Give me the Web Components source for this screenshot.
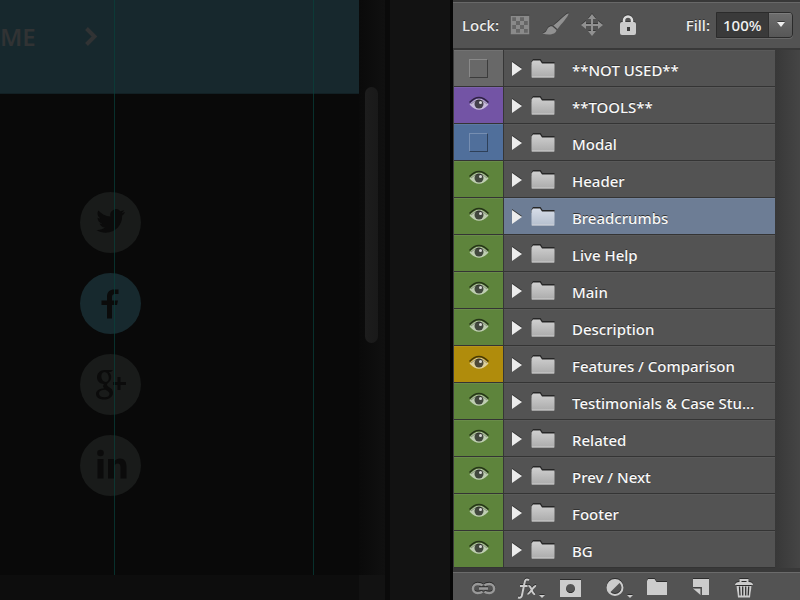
<!DOCTYPE html>
<html lang="en">
<head>
<meta charset="utf-8">
<title>Layers</title>
<style>
html, body { height: 100%; }
body { margin: 0; background: #0a0a0a; overflow: hidden; font-family: "Noto Sans", "Open Sans", sans-serif; }
</style>
</head>
<body>
<app-shell>
  <doc-canvas slot="canvas"></doc-canvas>
  <layers-panel slot="panel">
    <layer-row tint="#686868" off>**NOT USED**</layer-row>
    <layer-row tint="#7354a5">**TOOLS**</layer-row>
    <layer-row tint="#506f9b" off>Modal</layer-row>
    <layer-row tint="#5e843c">Header</layer-row>
    <layer-row tint="#5e843c" selected>Breadcrumbs</layer-row>
    <layer-row tint="#5e843c">Live Help</layer-row>
    <layer-row tint="#5e843c">Main</layer-row>
    <layer-row tint="#5e843c">Description</layer-row>
    <layer-row tint="#b08c0c">Features / Comparison</layer-row>
    <layer-row tint="#5e843c">Testimonials &amp; Case Stu...</layer-row>
    <layer-row tint="#5e843c">Related</layer-row>
    <layer-row tint="#5e843c">Prev / Next</layer-row>
    <layer-row tint="#5e843c">Footer</layer-row>
    <layer-row tint="#5e843c">BG</layer-row>
  </layers-panel>
</app-shell>
<script>
const define = (name, html, setup) => customElements.define(name, class extends HTMLElement {
  connectedCallback() {
    if (this.shadowRoot) return;
    const t = document.createElement('template');
    t.innerHTML = html;
    this.attachShadow({ mode: 'open' }).append(t.content.cloneNode(true));
    if (setup) setup(this, this.shadowRoot);
  }
});

define('app-shell', `
<style>
  :host { display: grid; grid-template-columns: minmax(0, 1fr) 350px; height: 100vh; }
  ::slotted(*) { min-width: 0; min-height: 0; }
</style>
<slot name="canvas"></slot><slot name="panel"></slot>`);

define('social-link', `
<style>
  :host { display: block; }
  a { display: flex; align-items: center; justify-content: center; width: 61px; height: 61px; border-radius: 50%; background: #191b1a; color: #0b0b0b; }
  :host([active]) a { background: #17292e; }
  svg { width: 61px; height: 61px; fill: currentColor; }
</style>
<a href="#"></a>`, (host, root) => {
  const shapes = {
    Twitter: '<path d="M45 20c-1 .5-2 .8-3.300 1 1-.8 2-1.800 2.400-3-1.100.6-2.300 1.100-3.700 1.300a5.800 5.800 0 0 0-10 5.300c-5-.3-9-2.500-12-6-1.700 3-.8 6 1.800 7.800-1 0-1.900-.3-2.700-.7 0 3 2 5.200 4.700 5.800-.9.200-1.700.3-2.600.1.700 2.300 2.800 4 5.400 4-2.400 1.900-5.200 2.700-8.500 2.400 2.800 1.800 6 2.800 9 2.800 10.500 0 17-8.500 16.600-17 1.200-.9 2.200-2 2.900-3.800z"/>',
    Facebook: '<path d="M27 45.500V32h-5.500v-4.500H27V24c0-5.500 3-7.500 7-7.500h4.500v4.500h-3.500c-2 0-3 .8-3 2.800v3.700h6l-1 4.500h-5v13.500z"/>',
    'Google Plus': '<path fill-rule="evenodd" d="M33 16h-8c-5 0-8 3.400-8 7.200 0 4 3 6.700 7 6.700-1.600 2-1 3.300.4 4.300-5 .2-8.400 2.500-8.400 5.800 0 3.400 3.300 5.500 8 5.500 5.500 0 9-3 9-6.800 0-5.500-6-5.500-6-8 0-2 4.200-2.700 4.200-7.800 0-2.200-1-3.900-2.400-5H31zM24.500 18c5 0 6 10 1.400 10-5.500 0-6.200-10-1.400-10zm1 17.700c2.500 1.600 4 2.500 4 4 0 2.300-2 3.600-4.900 3.600-3.700 0-5.600-1.600-5.600-3.800 0-2.600 2.600-3.800 6.500-3.800zM37.500 23h3v5H46v3h-5.500v5h-3v-5H33v-3h4.500z"/>',
    LinkedIn: '<circle cx="20.500" cy="18" r="3.300"/><path d="M17.500 24h6v19.500h-6zM28 24h6v2.600c1.600-2.200 3.700-3.100 6-3.100 4.500 0 6.500 3 6.500 8v12h-6V32.500c0-2.700-.8-4-2.800-4-2.300 0-3.700 1.600-3.700 4.500v10.500h-6z"/>'
  };
  const n = host.getAttribute('name'), a = root.querySelector('a');
  a.setAttribute('aria-label', n);
  a.innerHTML = '<svg viewBox="0 0 61 61" aria-hidden="true">' + shapes[n] + '</svg>';
});

define('doc-canvas', `
<style>
  :host { display: grid; grid-template-columns: minmax(0, 1fr) 26px 5px 60px; grid-template-rows: minmax(0, 1fr) 25px; overflow: hidden; background: #0a0a0a; }
  .page { position: relative; overflow: hidden; background: #090909; }
  .banner { box-sizing: border-box; display: flex; align-items: center; gap: 48px; height: 94px; padding-bottom: 20px; background: #17282d; border-bottom: 1px solid #122024; color: #313334; }
  .banner a { color: inherit; font-size: 24px; line-height: 34px; font-weight: 600; text-decoration: none; }
  .banner svg { width: 14px; height: 22px; }
  nav { display: grid; gap: 20px; padding: 98px 80px; justify-content: start; }
  .guide { position: absolute; top: 0; bottom: 0; width: 1px; background: rgba(8, 65, 60, .7); }
  .g1 { left: 114px; } .g2 { left: 313px; }
  .track { background: linear-gradient(90deg, #0a0a0a, #101010); padding: 87px 7px 0 6px; }
  .thumb { height: 256px; border-radius: 7px; background: linear-gradient(90deg, #1d1d1d, #191919); }
  .gap { grid-row: 1 / 3; grid-column: 3; background: #0a0a0a; }
  .side { grid-row: 1 / 3; grid-column: 4; background: #121212; }
  .foot { background: #0d0d0d; } .corner { background: #121212; }
</style>
<div class="page">
  <div class="banner"><a href="#">ME</a><svg viewBox="0 0 14 22" aria-hidden="true"><path d="M2.500 2.500l8 8-8 8" fill="none" stroke="currentColor" stroke-width="4"/></svg></div>
  <nav aria-label="Share">
    <social-link name="Twitter"></social-link>
    <social-link name="Facebook" active></social-link>
    <social-link name="Google Plus"></social-link>
    <social-link name="LinkedIn"></social-link>
  </nav>
  <i class="guide g1"></i><i class="guide g2"></i>
</div>
<div class="track"><div class="thumb"></div></div>
<div class="gap"></div><div class="side"></div>
<div class="foot"></div><div class="corner"></div>`);

define('lock-bar', `
<style>
  :host { box-sizing: border-box; display: flex; align-items: center; justify-content: space-between; height: 50px; padding: 0 7px 0 9px; background: #535353; border-top: 2px solid #383838; border-bottom: 2px solid #393939; box-shadow: inset 0 1px #686868; color: #eee; font-size: 15px; font-weight: 500; text-shadow: 0 -1px #333; }
  .group { display: flex; align-items: center; }
  .locks { gap: 9px; }
  .tools { display: flex; gap: 12px; }
  button { padding: 0; border: 0; background: none; color: #919191; }
  .tools button { width: 24px; height: 24px; }
  svg { display: block; overflow: visible; filter: drop-shadow(0 -1px #3a3a3a); }
  .field { display: flex; box-sizing: border-box; width: 77px; height: 26px; margin-left: 6px; border: 1px solid #2b2b2b; border-radius: 0 4px 4px 0; background: #3a3a3a; box-shadow: 0 1px #686868; overflow: hidden; }
  input { box-sizing: border-box; width: 51px; min-width: 0; padding: 0 0 0 6px; border: 0; background: none; color: #f2f2f2; font: inherit; font-size: 15px; outline: 0; }
  .field button { flex: 1; display: grid; place-items: center; border-left: 1px solid #2f2f2f; background: linear-gradient(#6d6d6d, #575757); box-shadow: inset 0 1px #7d7d7d; color: #eee; }
</style>
<div class="group locks"><span>Lock:</span>
  <div class="tools">
    <button aria-label="Lock transparent pixels"><svg width="24" height="24" viewBox="0 0 24 24"><path fill="#666" d="M3 3h18v18H3z"/><path fill="none" stroke="#8a8a8a" d="M3.500 3.500h17v17h-17z" stroke-width="1.500"/><path fill="#8a8a8a" d="M8 4h4v4H8zM16 4h4v4h-4zM4 8h4v4H4zM12 8h4v4h-4zM8 12h4v4H8zM16 12h4v4h-4zM4 16h4v4H4zM12 16h4v4h-4z"/></svg></button>
    <button aria-label="Lock image pixels"><svg width="28" height="24" viewBox="2 0 28 24"><path fill="currentColor" d="M26.500 .5c1 1.500-7 10.500-11 15.500l-4-3.500C17 8 25-.5 26.500 .5zM10.500 13.500l4 3.500c-.4 4.500-7.500 5.500-14 3.500 4-1 3.800-3.300 5.500-5.500 1.200-1.300 3-2 4.500-1.500z"/></svg></button>
    <button aria-label="Lock position"><svg width="24" height="24" viewBox="0 0 24 24"><path d="M12 4v16M4 12h16" stroke="currentColor" stroke-width="2"/><path fill="currentColor" d="M12 1l4 5H8zM12 23l4-5H8zM1 12l5-4v8zM23 12l-5-4v8z"/></svg></button>
    <button aria-label="Lock all"><svg width="24" height="24" viewBox="0 0 24 24"><path d="M8 11V7.500a4 4 0 0 1 8 0V11" fill="none" stroke="#ddd" stroke-width="2.500"/><rect x="4" y="9" width="16" height="13" rx="2" fill="#ccc"/><path d="M11 14h3v4h-3z" fill="#3d3d3d"/></svg></button>
  </div>
</div>
<div class="group"><label for="fill">Fill:</label>
  <div class="field"><input id="fill" value="100%"><button aria-label="Fill presets"><svg width="10" height="6" viewBox="0 0 10 6"><path d="M1 0h8L5 5z" fill="currentColor"/></svg></button></div>
</div>`);

define('layer-row', `
<style>
  :host { display: grid; grid-template-columns: 49px 1px minmax(0, 1fr); height: 36px; border-bottom: 1px solid #343434; }
  .vis { position: relative; display: flex; align-items: center; justify-content: center; background: var(--tint); box-shadow: inset 0 1px rgba(255,255,255,.07); }
  input { position: absolute; inset: 0; width: 100%; height: 100%; margin: 0; opacity: 0; }
  .eye { display: none; width: 22px; height: 20px; }
  input:checked ~ .eye { display: block; }
  .box { box-sizing: border-box; width: 19px; height: 19px; border: 1px solid rgba(255,255,255,.22); border-right-color: rgba(0,0,0,.42); border-bottom-color: rgba(0,0,0,.42); }
  input:checked ~ .box { display: none; }
  .line { background: #363636; }
  .name { box-sizing: border-box; display: flex; align-items: center; min-width: 0; padding: 2px 0 0 7px; background: #535353; box-shadow: inset 0 1px #595959; color: #f8f8f8; font-size: 15px; font-weight: 500; text-shadow: 0 -1px #333; }
  :host([selected]) .name { background: #6d7d95; box-shadow: inset 0 1px #73839b; }
  button { width: 12px; height: 20px; padding: 0; border: 0; background: none; }
  svg { display: block; }
  .folder { flex: none; margin-left: 8px; }
  .text { margin: 2px 0 0 17px; white-space: nowrap; overflow: hidden; text-overflow: ellipsis; line-height: 22px; }
  .a { stop-color: #d0d0d0; } .b { stop-color: #ababab; }
  :host([selected]) .a { stop-color: #d7dde8; } :host([selected]) .b { stop-color: #b5bfce; }
</style>
<label class="vis"><input type="checkbox">
  <svg class="eye" viewBox="0 0 22 20" aria-hidden="true"><path d="M1.500 9.500Q11-2 20.500 9.500 11 20 1.500 9.500z" fill="#fff" fill-opacity=".6"/><path d="M1.500 7.500Q11-2.500 20.500 7.500" fill="none" stroke="#000" stroke-opacity=".6" stroke-width="1.500"/><path d="M3 9Q11 1 19 9" fill="none" stroke="#000" stroke-opacity=".3"/><circle cx="11" cy="9" r="4.500" fill="#000" fill-opacity=".65"/><circle cx="12.500" cy="7.500" r="1.500" fill="#fff" fill-opacity=".8"/></svg>
  <span class="box"></span>
</label>
<div class="line"></div>
<div class="name">
  <button aria-label="Expand group"><svg width="12" height="20" viewBox="0 0 12 20"><path d="M1 2v14l10-7z" fill="#333"/><path d="M1 3v14l10-7z" fill="#ececec"/></svg></button>
  <svg class="folder" width="24" height="22" viewBox="0 0 24 22" aria-hidden="true"><defs><linearGradient id="g" x2="0" y2="1"><stop class="a"/><stop class="b" offset="1"/></linearGradient></defs><path d="M.500 3.500L2 1h7.500l2 3H23.500v3H.500z" fill="#262626"/><path d="M.500 19.500v-15l1.500-2h7l2 3h12.500v14z" fill="url(#g)"/><path d="M1 19h22" stroke="#e0e0e0" stroke-opacity=".7"/></svg>
  <span class="text"><slot></slot></span>
</div>`, (host, root) => {
  host.style.setProperty('--tint', host.getAttribute('tint'));
  const box = root.querySelector('input');
  box.checked = !host.hasAttribute('off');
  box.setAttribute('aria-label', 'Visible: ' + host.textContent);
});

define('panel-actions', `
<style>
  :host { box-sizing: border-box; display: flex; justify-content: space-between; align-items: start; height: 32px; padding: 5px 42px 0 16px; background: #535353; border-top: 4px solid #393939; box-shadow: inset 0 1px #6b6b6b; }
  button { width: 28px; height: 23px; padding: 0; border: 0; background: none; color: #ccc; }
  svg { display: block; width: 28px; height: 23px; overflow: visible; filter: drop-shadow(0 -1px #2c2c2c); }
</style>
<button aria-label="Link layers"><svg viewBox="0 0 28 23" fill="none" stroke="#999" stroke-width="2.500"><path d="M13.500 8.500C12.500 7.300 11 7 8.500 7a4.500 4.500 0 0 0 0 9c2.500 0 4-.3 5-1.500M15.500 8.500C16.500 7.300 18 7 20.500 7a4.500 4.500 0 0 1 0 9c-2.500 0-4-.3-5-1.500M10 11.500h9"/></svg></button>
<button aria-label="Layer style"><svg viewBox="-3 0 28 23" fill="none" stroke="currentColor" stroke-width="2"><path d="M13 3c-3-1.500-4 0-4.500 3L6 18c-.5 2.500-1.500 3-4 2.500M4 9h7.500M12.500 9c3.500-1 3 9 6.500 8M20 9c-2.500-.5-6 8-8.500 8"/><path d="M23 18h6l-3 3z" fill="currentColor" stroke="none"/></svg></button>
<button aria-label="Add mask"><svg viewBox="0 0 28 23"><path fill-rule="evenodd" fill="currentColor" d="M4 3h21v17H4zM14.500 7a4.500 4.500 0 1 0 .010 0z"/></svg></button>
<button aria-label="Adjustment layer"><svg viewBox="-5 0 28 23"><circle cx="10" cy="10.500" r="7.500" fill="none" stroke="currentColor" stroke-width="2"/><path d="M15.500 5A7.500 7.500 0 0 0 4.500 16z" fill="currentColor"/><path d="M22 18h6l-3 3z" fill="currentColor"/></svg></button>
<button aria-label="New group"><svg viewBox="0 0 28 23"><path d="M4 18V4l1-2h6.500l2 3H24v13z" fill="currentColor"/></svg></button>
<button aria-label="New layer"><svg viewBox="0 0 28 23"><path d="M6 2h16v16h-7v-8H6z" fill="currentColor"/><path d="M6 11.500h7.500V18z" fill="currentColor"/></svg></button>
<button aria-label="Delete layer"><svg viewBox="0 0 28 23"><path d="M10.500 5V3h7v2" fill="none" stroke="currentColor" stroke-width="2"/><path d="M5 8c0-2 2-3 4-3h10c2 0 4 1 4 3z" fill="currentColor"/><path d="M6.500 9h15L20 20.500H8z" fill="currentColor"/><path d="M9.500 9.500l.5 9M12.700 9.500v9M15.700 9.500v9M18.700 9.500l-.5 9" stroke="#333" stroke-width="1.300"/></svg></button>`);

define('layers-panel', `
<style>
  :host { display: grid; grid-template-rows: auto minmax(0, 1fr) auto; border-left: 3px solid #060606; }
  .list { display: grid; grid-template-columns: minmax(0, 1fr) 25px; overflow: hidden; border-left: 1px solid #3c3c3c; background: #393939; }
  .track { background: linear-gradient(90deg, #383838, #454545); }
</style>
<lock-bar></lock-bar>
<div class="list"><div><slot></slot></div><div class="track"></div></div>
<panel-actions></panel-actions>`);
</script>
</body>
</html>
